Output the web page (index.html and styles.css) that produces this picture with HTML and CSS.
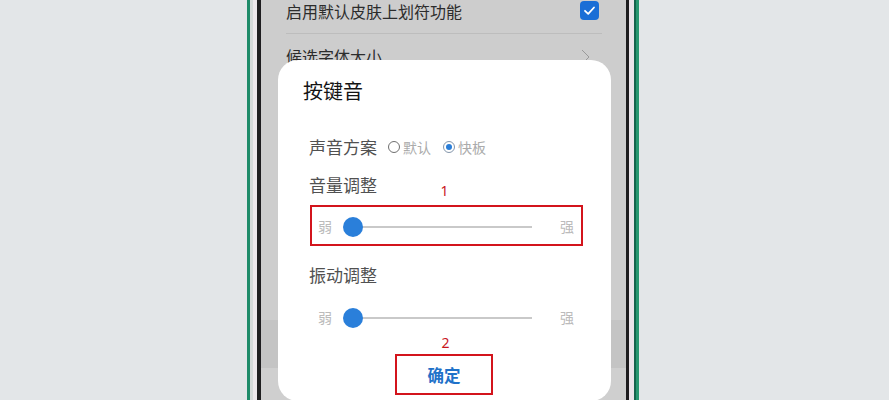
FILE: index.html
```html
<!DOCTYPE html>
<html lang="zh-CN">
<head>
<meta charset="utf-8">
<title>按键音</title>
<link rel="stylesheet" href="styles.css">
</head>
<body>
<div class="stage">
  <div class="frame-left">
    <div class="strip s-green"></div>
    <div class="strip s-light"></div>
    <div class="strip s-white"></div>
    <div class="strip s-dark"></div>
  </div>
  <div class="screen">
    <div class="bg-content">
      <div class="row row-first">
        <span class="row-text">启用默认皮肤上划符功能</span>
        <span class="checkbox">
          <svg width="19" height="19" viewBox="0 0 19 19"><path d="M5 9.8 L8.2 12.8 L14 6.5" fill="none" stroke="#fff" stroke-width="1.8" stroke-linecap="round" stroke-linejoin="round"/></svg>
        </span>
      </div>
      <div class="sep"></div>
      <div class="row row-second">
        <span class="row-text">候选字体大小</span>
        <svg class="chev" width="10" height="16" viewBox="0 0 10 16"><path d="M1 1 L8 8 L1 15" fill="none" stroke="#9a9a9a" stroke-width="1"/></svg>
      </div>
    </div>
    <div class="dialog">
      <div class="title">按键音</div>
      <div class="body">
        <div class="scheme">
          <span class="label">声音方案</span>
          <span class="option first"><span class="radio"></span><span class="opt-text">默认</span></span>
          <span class="option"><span class="radio checked"></span><span class="opt-text">快板</span></span>
        </div>
        <div class="label-row volume-row">
          <span class="label">音量调整</span>
          <span class="mark">1</span>
          <span></span>
        </div>
        <div class="slider-box boxed">
          <span class="end">弱</span>
          <div class="slider"><span class="track"></span><span class="thumb"></span></div>
          <span class="end">强</span>
        </div>
        <div class="label-row vib-row">
          <span class="label">振动调整</span>
        </div>
        <div class="slider-box plain">
          <span class="end">弱</span>
          <div class="slider"><span class="track"></span><span class="thumb"></span></div>
          <span class="end">强</span>
        </div>
      </div>
      <div class="mark mark-2">2</div>
      <div class="btn-wrap"><div class="ok">确定</div></div>
    </div>
  </div>
  <div class="frame-right">
    <div class="strip r-dark"></div>
    <div class="strip r-white"></div>
    <div class="strip r-dgreen"></div>
    <div class="strip r-green"></div>
  </div>
</div>
</body>
</html>
```

FILE: styles.css
```css
html, body {
  margin: 0;
  padding: 0;
}
body {
  width: 889px;
  height: 400px;
  overflow: hidden;
  background: #e3e6e8;
  font-family: "Noto Sans CJK SC", "Noto Sans", sans-serif;
}
.stage {
  display: flex;
  height: 400px;
  padding-left: 247px;
}
.frame-left, .frame-right {
  display: flex;
  height: 400px;
}
.strip { height: 400px; }
.s-green { width: 3px; background: #1f8b69; }
.s-light { width: 3px; background: #d3d8d8; }
.s-white { width: 4px; background: #ebe6ea; }
.s-dark { width: 4px; background: #1e1d1f; }
.r-dark { width: 3px; background: #1d1c1e; }
.r-white { width: 5px; background: #e9e3e8; }
.r-dgreen { width: 2px; background: #14634c; }
.r-green { width: 3px; background: #27966f; }

.screen {
  position: relative;
  width: 365px;
  height: 400px;
  overflow: hidden;
  background: linear-gradient(to bottom, #cdcdcd 0, #cdcdcd 320px, #c4c4c4 320px, #c4c4c4 368px, #cfcfcf 368px);
}
.bg-content {
  padding: 1px 24px 0 25px;
}
.row {
  display: flex;
  justify-content: space-between;
  align-items: center;
  height: 20px;
}
.row-text {
  font-size: 16px;
  line-height: 20px;
  color: #2c2c2c;
}
.checkbox {
  width: 19px;
  height: 19px;
  margin-right: 3px;
  margin-top: -2px;
  border-radius: 4px;
  background: #1a6ed6;
  display: flex;
}
.sep {
  height: 1px;
  margin-top: 12px;
  background: #bdbdbd;
}
.row-second {
  margin-top: 12px;
}
.chev {
  margin-right: 11px;
  margin-top: 2px;
}

.dialog {
  position: absolute;
  left: 17px;
  top: 60px;
  width: 333px;
  height: 341px;
  background: #ffffff;
  border-radius: 20px;
  padding-top: 19px;
  box-sizing: border-box;
}
.title {
  padding-left: 25px;
  font-size: 20px;
  line-height: 24px;
  color: #141414;
  font-weight: 400;
}
.body {
  padding-left: 31px;
  width: 274px;
}
.label {
  font-size: 17px;
  line-height: 24px;
  color: #515151;
}
.scheme {
  display: flex;
  align-items: center;
  margin-top: 32px;
  height: 24px;
}
.option {
  display: flex;
  align-items: center;
}
.option.first { margin-left: 11px; }
.option + .option { margin-left: 12px; }
.radio {
  width: 10px;
  height: 10px;
  border: 1.2px solid #6f6f6f;
  border-radius: 50%;
  display: flex;
  align-items: center;
  justify-content: center;
}
.radio.checked {
  border-color: #8496ab;
}
.radio.checked::after {
  content: "";
  width: 6px;
  height: 6px;
  border-radius: 50%;
  background: #2a7ed8;
}
.opt-text {
  margin-left: 3px;
  font-size: 14px;
  line-height: 20px;
  color: #ababab;
}
.label-row {
  display: grid;
  grid-template-columns: 1fr auto 1fr;
  align-items: end;
  height: 24px;
}
.volume-row { margin-top: 14px; }
.vib-row { margin-top: 17px; }
.mark {
  font-family: "Noto Sans", sans-serif;
  font-size: 14px;
  line-height: 14px;
  color: #c8161d;
  text-align: center;
  margin-left: -3px;
}
.volume-row .mark { margin-bottom: -1px; }
.slider-box {
  display: flex;
  align-items: center;
  height: 41px;
  box-sizing: border-box;
  padding-left: 7px;
  margin-left: 1px;
}
.boxed {
  margin-top: 8px;
  border: 2px solid #d3141c;
  padding-left: 6px;
}
.plain {
  margin-top: 9px;
  padding-left: 8px;
}
.end {
  font-size: 14px;
  line-height: 20px;
  color: #bbbbbb;
  width: 14px;
}
.slider {
  position: relative;
  width: 189px;
  height: 20px;
  margin-left: 11px;
  margin-right: 28px;
}
.track {
  position: absolute;
  left: 10px;
  right: 0;
  top: 10px;
  height: 2px;
  background: #c9c9c9;
}
.thumb {
  position: absolute;
  left: 0;
  top: 1px;
  width: 20px;
  height: 20px;
  border-radius: 50%;
  background: #2a7fda;
}
.mark-2 {
  margin-top: -1px;
  line-height: 14px;
  margin-left: 0;
  padding-left: 2px;
}
.btn-wrap {
  display: flex;
  justify-content: center;
  margin-top: 4px;
}
.ok {
  width: 98px;
  height: 41px;
  box-sizing: border-box;
  border: 2px solid #d3141c;
  display: flex;
  align-items: center;
  justify-content: center;
  font-size: 16.5px;
  font-weight: 700;
  color: #1f72c9;
  margin-left: -1px;
}
```
